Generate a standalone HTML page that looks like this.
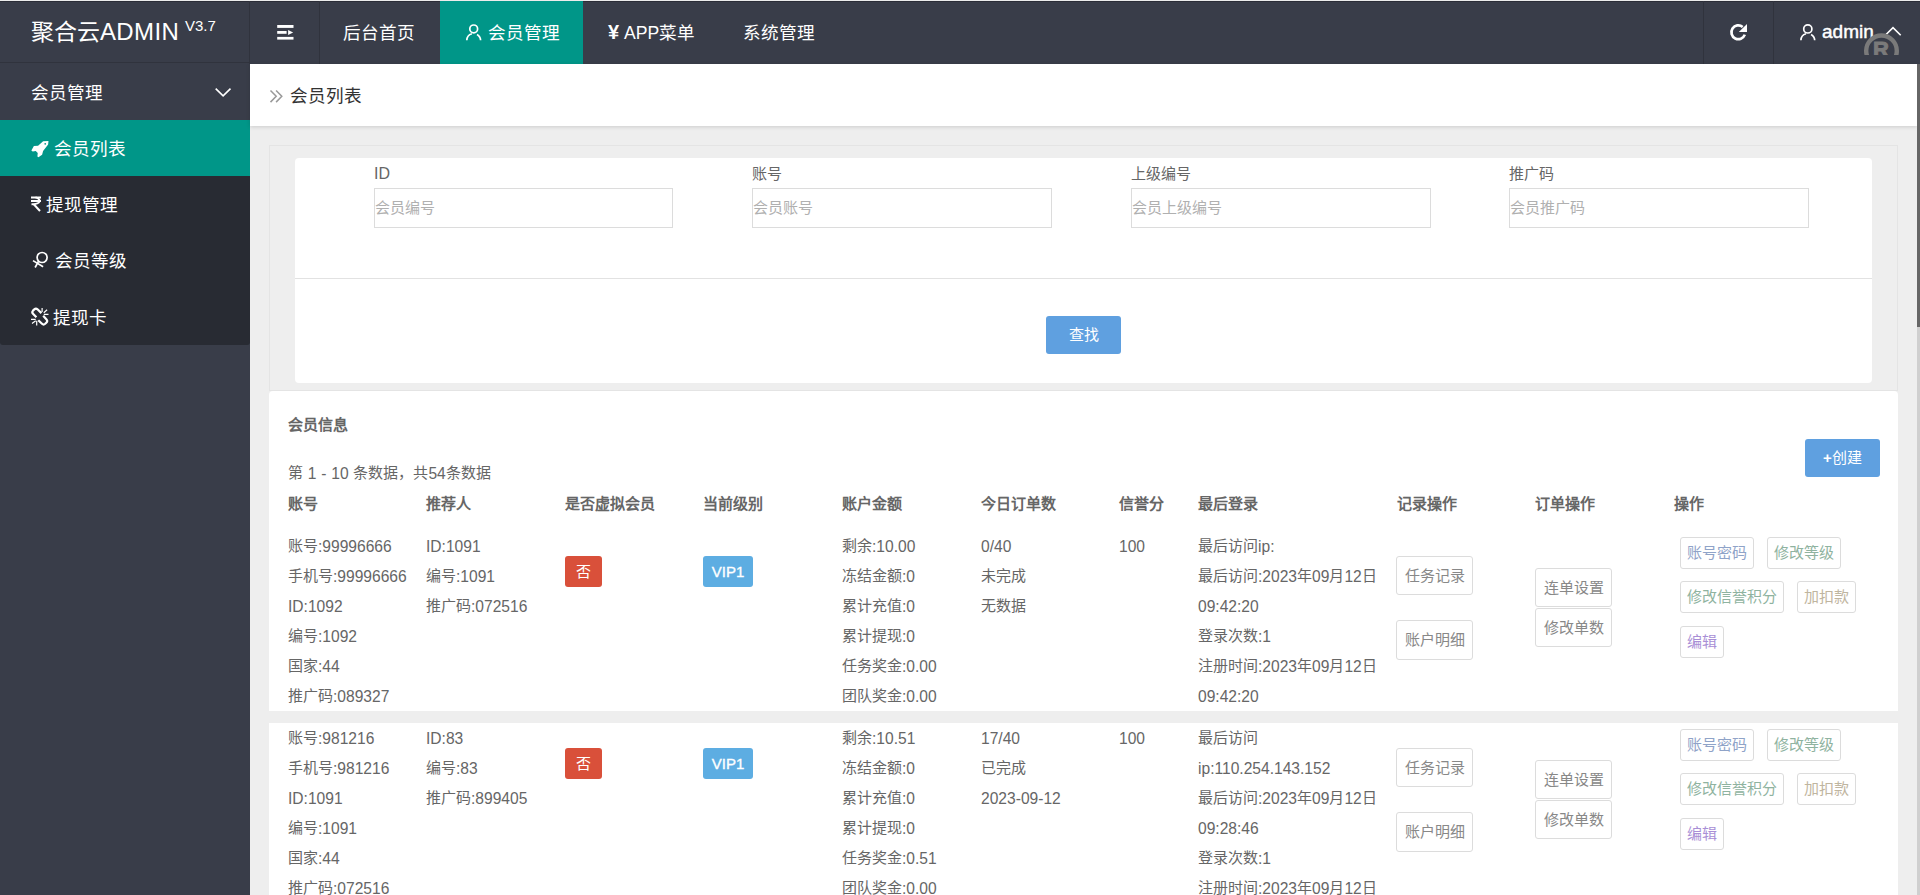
<!DOCTYPE html>
<html lang="zh-CN"><head><meta charset="utf-8">
<style>
*{box-sizing:border-box;margin:0;padding:0}
html,body{width:1920px;height:895px;overflow:hidden;background:#eeeeee;font-family:"Liberation Sans",sans-serif;color:#666}
.a{position:absolute;white-space:nowrap}
#topline{left:0;top:0;width:1920px;height:1px;background:#ececec}
#hdr{left:0;top:1px;width:1920px;height:63px;background:#393d49;border-top:1px solid #2b2d37}
.vsep{position:absolute;top:1px;width:1px;height:63px;background:#30333d}
.htxt{position:absolute;color:#fff;font-size:17.6px;line-height:24px;top:21px}
#side{left:0;top:64px;width:250px;height:831px;background:#393d49}
#child{left:0;top:120px;width:250px;height:225px;background:#282b33;border-radius:0 0 3px 3px}
.sitem{position:absolute;left:0;width:250px;height:56px}
.stxt{position:absolute;color:#fff;font-size:17.6px;line-height:24px}
#crumb{left:250px;top:64px;width:1667px;height:62px;background:#fff;box-shadow:0 1px 4px rgba(0,0,0,.14)}
#scroll{left:1917px;top:64px;width:3px;height:831px;background:#cfcfcf}
#thumb{left:1917px;top:64px;width:3px;height:263px;background:#666}
#box1{left:269px;top:145px;width:1629px;height:246px;border:1px solid #e4e4e4;background:#eeeeee}
#card1{left:295px;top:158px;width:1577px;height:225px;background:#fff;border-radius:4px}
#card1sep{left:295px;top:278px;width:1577px;height:1px;background:#e2e2e2}
.lbl{position:absolute;font-size:15px;line-height:20px;color:#666}
.inp{position:absolute;width:299px;height:40px;border:1px solid #dcdcdc;background:#fff}
.ph{position:absolute;font-size:15px;line-height:20px;color:#b0b0b0}
.btnb{position:absolute;background:#5fa0e0;border-radius:3px;color:#fff;font-size:15px;text-align:center}
#panel{left:269px;top:391px;width:1629px;height:320px;background:#fff;border-radius:4px 4px 0 0}
#panel2{left:269px;top:723px;width:1629px;height:172px;background:#fff}
.th{position:absolute;font-size:15px;font-weight:bold;color:#666;line-height:20px}
.td{position:absolute;font-size:15px;color:#666;line-height:30px}
.l{font-size:15.6px;position:relative;top:1px}
.badge{position:absolute;width:37px;height:31px;border-radius:3px;color:#fff;font-size:15px;line-height:31px;text-align:center}
.ob{position:absolute;border:1px solid #dcdcdc;border-radius:3px;background:#fff;font-size:15px;color:#888;text-align:center}
</style></head><body>
<div class="a" id="topline"></div>
<div class="a" id="hdr"></div>
<div class="vsep" style="left:249px"></div>
<div class="vsep" style="left:319px"></div>
<div class="vsep" style="left:1703px"></div>
<div class="vsep" style="left:1773px"></div>
<div class="a" style="left:0;top:62px;width:249px;height:1px;background:#30333d"></div>
<!-- logo -->
<div class="a" style="left:31px;top:17px;color:#fff;font-size:24px;line-height:30px"><span style="font-size:23px">聚合云</span><span style="letter-spacing:0.35px">ADMIN</span></div>
<div class="a" style="left:185px;top:17px;color:#fff;font-size:15px;line-height:18px">V3.7</div>
<!-- hamburger -->
<svg class="a" style="left:277px;top:24px" width="17" height="16" viewBox="0 0 17 16">
<rect x="0.2" y="1" width="16.3" height="2.9" fill="#fff"/>
<rect x="0.2" y="7" width="9.4" height="2.8" fill="#fff"/>
<path d="M11.1 5.9 L16.1 8.4 L11.1 10.9Z" fill="#fff"/>
<rect x="0.2" y="12.9" width="16.3" height="2.7" fill="#fff"/>
</svg>
<!-- top nav -->
<div class="htxt" style="left:343px">后台首页</div>
<div class="a" style="left:440px;top:1px;width:143px;height:63px;background:#009688"></div>
<div class="htxt" style="left:488px">会员管理</div>
<div class="htxt" style="left:624px">APP菜单</div>
<div class="htxt" style="left:743px">系统管理</div>
<!-- right -->
<div class="htxt" style="left:1822px;top:20px;font-size:19px;-webkit-text-stroke:0.45px #fff">admin</div>

<!-- sidebar -->
<div class="a" id="side"></div>
<div class="a" id="child"></div>
<div class="a" style="left:0;top:120px;width:250px;height:56px;background:#009688"></div>
<div class="stxt" style="left:31px;top:81px">会员管理</div>
<div class="stxt" style="left:54px;top:137px">会员列表</div>
<div class="stxt" style="left:46px;top:193px">提现管理</div>
<div class="stxt" style="left:55px;top:249px">会员等级</div>
<div class="stxt" style="left:53px;top:306px">提现卡</div>

<!-- crumb -->
<div class="a" id="crumb"></div>
<div class="a" style="left:290px;top:84px;color:#333;font-size:17.6px;line-height:24px">会员列表</div>
<div class="a" id="scroll"></div>
<div class="a" id="thumb"></div>

<!-- search form -->
<div class="a" id="box1"></div>
<div class="a" id="card1"></div>
<div class="a" id="card1sep"></div>
<div class="lbl" style="left:374px;top:164px;font-size:16px">ID</div>
<div class="lbl" style="left:752px;top:164px">账号</div>
<div class="lbl" style="left:1131px;top:164px">上级编号</div>
<div class="lbl" style="left:1509px;top:164px">推广码</div>
<div class="inp" style="left:374px;top:188px"></div>
<div class="inp" style="left:752px;top:188px;width:300px"></div>
<div class="inp" style="left:1131px;top:188px;width:300px"></div>
<div class="inp" style="left:1509px;top:188px;width:300px"></div>
<div class="ph" style="left:375px;top:198px">会员编号</div>
<div class="ph" style="left:753px;top:198px">会员账号</div>
<div class="ph" style="left:1132px;top:198px">会员上级编号</div>
<div class="ph" style="left:1510px;top:198px">会员推广码</div>
<div class="btnb" style="left:1046px;top:316px;width:75px;height:38px;line-height:38px">查找</div>

<!-- panel -->
<div class="a" id="panel"></div>
<div class="a" id="panel2"></div>

<!-- icons -->
<svg class="a" style="left:0;top:0" width="1920" height="64" viewBox="0 0 1920 64">
 <g fill="none" stroke="#fff" stroke-width="1.7">
  <circle cx="473.7" cy="28.9" r="3.9"/>
  <path d="M466.8,40.3 A7,7 0 0 1 471.9,33.7"/>
  <path d="M477,34.4 A7,7 0 0 1 480.6,40.3"/>
  <circle cx="1807.8" cy="28.9" r="4.1"/>
  <path d="M1800.9,40.3 A7,7 0 0 1 1806,33.7"/>
  <path d="M1811.1,34.4 A7,7 0 0 1 1814.7,40.3"/>
  <path d="M1885.3,35.3 L1893,27.6 L1900.7,35.3" stroke-width="1.6"/>
  <path d="M1742.7,26.96 A6.9,6.9 0 1 0 1744.8,34.6" stroke-width="2.7"/>
 </g>
 <path d="M1747,23.9 L1747,31.9 L1738.8,31.9 Z" fill="#fff"/>
</svg>
<div class="a" style="left:1860px;top:30px;width:45px;height:25px;overflow:hidden">
 <svg width="45" height="40" viewBox="1860 30 45 40" style="position:absolute;left:0;top:0">
  <circle cx="1881.5" cy="50.8" r="15.3" fill="none" stroke="#7a7a7a" stroke-width="4.4"/>
  <text x="1873" y="57" font-family="Liberation Sans" font-weight="bold" font-size="22" fill="#7a7a7a" stroke="#7a7a7a" stroke-width="1">R</text>
 </svg>
</div>
<div class="a" style="left:608px;top:20px;color:#fff;font-size:20px;font-weight:bold;line-height:24px">¥</div>
<svg class="a" style="left:0;top:64px" width="300" height="281" viewBox="0 64 300 281">
 <path d="M215.7,88.6 L223.1,95.9 L230.5,88.6" fill="none" stroke="#fff" stroke-width="1.6"/>
 <path d="M48.47,141.03 L43.1,141.2 L38.07,145.73 L33.88,146.06 L31.37,150.42 L32.71,151.43 L35.73,151.09 L37.74,153.1 L37.4,156.45 L38.41,157.13 L42.1,154.78 L43.1,151.09 L48.13,144.39 Z" fill="#fff"/>
 <circle cx="45.2" cy="143.8" r="0.85" fill="#009688"/>
 <g fill="none" stroke="#fff" stroke-width="2">
  <path d="M31,197.4 H41 M31,201 H41"/>
  <path d="M35.5,197.4 Q40,198.5 39.5,201.5 Q38.5,204.2 31.5,204.3"/>
  <path d="M33.5,204 L40,211"/>
 </g>
 <g fill="none" stroke="#fff" stroke-width="1.7">
  <circle cx="42.1" cy="257.5" r="5"/>
  <path d="M38.6,261.2 L35.1,267.5"/>
  <path d="M33,260.6 L43.1,266.8"/>
 </g>
 <g fill="none" stroke="#fff" stroke-width="2.2" stroke-linecap="butt">
  <path d="M41.4,313.1 L37.5,309.3 Q35.9,307.9 34.3,309.4 L33,310.6 Q31.6,312.2 33,313.7 L36.4,317.2"/>
  <path d="M38.3,320.2 L42,323.8 Q43.6,325.3 45.2,323.8 L46.5,322.5 Q47.9,321 46.5,319.4 L43.2,315.8"/>
 </g>
 <g fill="none" stroke="#fff" stroke-width="1.2">
  <path d="M42.1,308 V312 M43.8,312.7 L47.1,309.7 M43.8,314.4 H48.5"/>
  <path d="M31,319.4 H35.7 M32,323.4 L35.7,320.8 M36.7,320.8 V325.5"/>
 </g>
</svg>
<svg class="a" style="left:262px;top:82px" width="30" height="30" viewBox="262 82 30 30">
 <path d="M270.5,90.5 L276.2,96.3 L270.5,102.1 M276.1,90.5 L281.8,96.3 L276.1,102.1" fill="none" stroke="#999" stroke-width="1.5"/>
</svg>

<!-- table -->
<div class="th" style="left:288px;top:415px">会员信息</div>
<div class="td" style="left:288px;top:458px;line-height:30px;word-spacing:0.6px">第 <span class="l">1</span> <span class="l">-</span> <span class="l">10</span> 条数据，共<span class="l">54</span>条数据</div>
<div class="btnb" style="left:1805px;top:439px;width:75px;height:38px;line-height:38px"><b>+</b>创建</div>
<div class="th" style="left:288px;top:494px">账号</div>
<div class="th" style="left:426px;top:494px">推荐人</div>
<div class="th" style="left:565px;top:494px">是否虚拟会员</div>
<div class="th" style="left:703px;top:494px">当前级别</div>
<div class="th" style="left:842px;top:494px">账户金额</div>
<div class="th" style="left:981px;top:494px">今日订单数</div>
<div class="th" style="left:1119px;top:494px">信誉分</div>
<div class="th" style="left:1198px;top:494px">最后登录</div>
<div class="th" style="left:1397px;top:494px">记录操作</div>
<div class="th" style="left:1535px;top:494px">订单操作</div>
<div class="th" style="left:1674px;top:494px">操作</div>
<div class="td" style="left:288px;top:531px">账号<span class="l">:99996666</span><br>手机号<span class="l">:99996666</span><br><span class="l">ID:1092</span><br>编号<span class="l">:1092</span><br>国家<span class="l">:44</span><br>推广码<span class="l">:089327</span></div>
<div class="td" style="left:426px;top:531px"><span class="l">ID:1091</span><br>编号<span class="l">:1091</span><br>推广码<span class="l">:072516</span></div>
<div class="td" style="left:842px;top:531px">剩余<span class="l">:10.00</span><br>冻结金额<span class="l">:0</span><br>累计充值<span class="l">:0</span><br>累计提现<span class="l">:0</span><br>任务奖金<span class="l">:0.00</span><br>团队奖金<span class="l">:0.00</span></div>
<div class="td" style="left:981px;top:531px"><span class="l">0/40</span><br>未完成<br>无数据</div>
<div class="td" style="left:1119px;top:531px"><span class="l">100</span></div>
<div class="td" style="left:1198px;top:531px">最后访问<span class="l">ip:</span><br>最后访问<span class="l">:2023</span>年<span class="l">09</span>月<span class="l">12</span>日<br><span class="l">09:42:20</span><br>登录次数<span class="l">:1</span><br>注册时间<span class="l">:2023</span>年<span class="l">09</span>月<span class="l">12</span>日<br><span class="l">09:42:20</span></div>
<div class="badge" style="left:565px;top:556px;background:#d9503a">否</div>
<div class="badge" style="left:703px;top:556px;width:50px;background:#5dade2;-webkit-text-stroke:0.35px #fff">VIP1</div>
<div class="ob" style="left:1396px;top:556px;width:77px;height:39px;line-height:37px">任务记录</div>
<div class="ob" style="left:1396px;top:620px;width:77px;height:40px;line-height:38px">账户明细</div>
<div class="ob" style="left:1535px;top:568px;width:77px;height:39px;line-height:37px">连单设置</div>
<div class="ob" style="left:1535px;top:608px;width:77px;height:39px;line-height:37px">修改单数</div>
<div class="ob" style="left:1680px;top:537px;width:74px;height:32px;line-height:30px;color:#8fa3c8">账号密码</div>
<div class="ob" style="left:1767px;top:537px;width:74px;height:32px;line-height:30px;color:#8fb3a0">修改等级</div>
<div class="ob" style="left:1680px;top:581px;width:104px;height:32px;line-height:30px;color:#8fb3a0">修改信誉积分</div>
<div class="ob" style="left:1797px;top:581px;width:59px;height:32px;line-height:30px;color:#bfb5a0">加扣款</div>
<div class="ob" style="left:1680px;top:626px;width:44px;height:32px;line-height:30px;color:#a98fd6">编辑</div>
<div class="td" style="left:288px;top:723px">账号<span class="l">:981216</span><br>手机号<span class="l">:981216</span><br><span class="l">ID:1091</span><br>编号<span class="l">:1091</span><br>国家<span class="l">:44</span><br>推广码<span class="l">:072516</span></div>
<div class="td" style="left:426px;top:723px"><span class="l">ID:83</span><br>编号<span class="l">:83</span><br>推广码<span class="l">:899405</span></div>
<div class="td" style="left:842px;top:723px">剩余<span class="l">:10.51</span><br>冻结金额<span class="l">:0</span><br>累计充值<span class="l">:0</span><br>累计提现<span class="l">:0</span><br>任务奖金<span class="l">:0.51</span><br>团队奖金<span class="l">:0.00</span></div>
<div class="td" style="left:981px;top:723px"><span class="l">17/40</span><br>已完成<br><span class="l">2023-09-12</span></div>
<div class="td" style="left:1119px;top:723px"><span class="l">100</span></div>
<div class="td" style="left:1198px;top:723px">最后访问<br><span class="l">ip:110.254.143.152</span><br>最后访问<span class="l">:2023</span>年<span class="l">09</span>月<span class="l">12</span>日<br><span class="l">09:28:46</span><br>登录次数<span class="l">:1</span><br>注册时间<span class="l">:2023</span>年<span class="l">09</span>月<span class="l">12</span>日</div>
<div class="badge" style="left:565px;top:748px;background:#d9503a">否</div>
<div class="badge" style="left:703px;top:748px;width:50px;background:#5dade2;-webkit-text-stroke:0.35px #fff">VIP1</div>
<div class="ob" style="left:1396px;top:748px;width:77px;height:39px;line-height:37px">任务记录</div>
<div class="ob" style="left:1396px;top:812px;width:77px;height:40px;line-height:38px">账户明细</div>
<div class="ob" style="left:1535px;top:760px;width:77px;height:39px;line-height:37px">连单设置</div>
<div class="ob" style="left:1535px;top:800px;width:77px;height:39px;line-height:37px">修改单数</div>
<div class="ob" style="left:1680px;top:729px;width:74px;height:32px;line-height:30px;color:#8fa3c8">账号密码</div>
<div class="ob" style="left:1767px;top:729px;width:74px;height:32px;line-height:30px;color:#8fb3a0">修改等级</div>
<div class="ob" style="left:1680px;top:773px;width:104px;height:32px;line-height:30px;color:#8fb3a0">修改信誉积分</div>
<div class="ob" style="left:1797px;top:773px;width:59px;height:32px;line-height:30px;color:#bfb5a0">加扣款</div>
<div class="ob" style="left:1680px;top:818px;width:44px;height:32px;line-height:30px;color:#a98fd6">编辑</div>
</body></html>
